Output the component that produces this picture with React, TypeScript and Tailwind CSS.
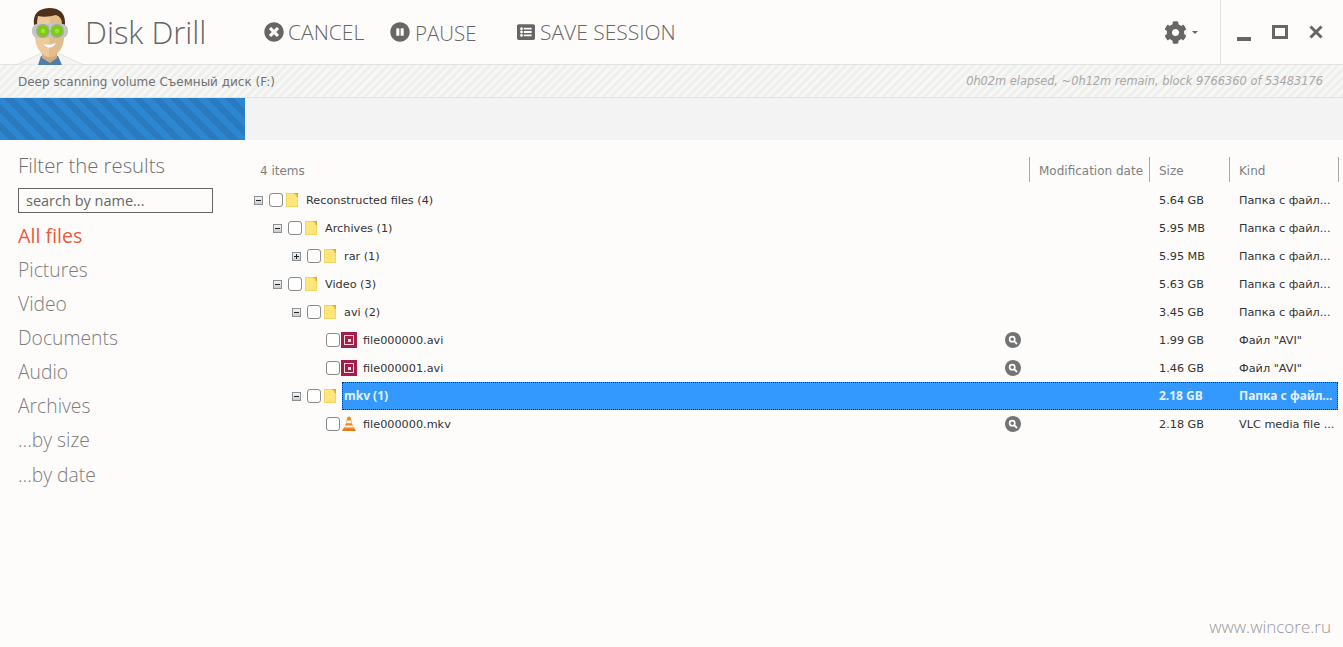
import React from 'react';
import { FaCog, FaListAlt, FaPauseCircle, FaTimesCircle } from 'react-icons/fa';

interface TreeRow {
  name: string;
  count?: string;
  size: string;
  kind: string;
  indent: string;
  toggle?: 'minus' | 'plus';
  icon: 'folder' | 'avi' | 'vlc';
  preview?: boolean;
  selected?: boolean;
}

const FOLDER_KIND = 'Папка с файл...';

const rows: TreeRow[] = [
  { name: 'Reconstructed files', count: '(4)', size: '5.64 GB', kind: FOLDER_KIND, indent: 'pl-[9px]', toggle: 'minus', icon: 'folder' },
  { name: 'Archives', count: '(1)', size: '5.95 MB', kind: FOLDER_KIND, indent: 'pl-[28px]', toggle: 'minus', icon: 'folder' },
  { name: 'rar', count: '(1)', size: '5.95 MB', kind: FOLDER_KIND, indent: 'pl-[47px]', toggle: 'plus', icon: 'folder' },
  { name: 'Video', count: '(3)', size: '5.63 GB', kind: FOLDER_KIND, indent: 'pl-[28px]', toggle: 'minus', icon: 'folder' },
  { name: 'avi', count: '(2)', size: '3.45 GB', kind: FOLDER_KIND, indent: 'pl-[47px]', toggle: 'minus', icon: 'folder' },
  { name: 'file000000.avi', size: '1.99 GB', kind: 'Файл "AVI"', indent: 'pl-[66px]', icon: 'avi', preview: true },
  { name: 'file000001.avi', size: '1.46 GB', kind: 'Файл "AVI"', indent: 'pl-[66px]', icon: 'avi', preview: true },
  { name: 'mkv', count: '(1)', size: '2.18 GB', kind: FOLDER_KIND, indent: 'pl-[47px]', toggle: 'minus', icon: 'folder', selected: true },
  { name: 'file000000.mkv', size: '2.18 GB', kind: 'VLC media file ...', indent: 'pl-[66px]', icon: 'vlc', preview: true },
];

const filters = ['Pictures', 'Video', 'Documents', 'Audio', 'Archives', '...by size', '...by date'];

const Logo = () => (
  <svg viewBox="0 0 90 65" className="w-[90px] h-[65px] shrink-0">
    {/* coat */}
    <path d="M16 65 L40 54 L60 54 L84 65 Z" fill="#f4f4f2" stroke="#dcdcd8" strokeWidth="0.8" />
    <path d="M38 65 L41 56 L58 56 L62 65 Z" fill="#4f7fa8" />
    {/* neck and face */}
    <path d="M42 46 L42 58 L50 63 L57 58 L57 46 Z" fill="#d3ab7c" />
    <path d="M35 20 Q35 12 49 12 Q64 12 64 20 L64 38 Q63 50 54 56 Q49 58 45 56 Q36 50 35 38 Z" fill="#ecca9b" />
    <path d="M50 12 Q64 12 64 20 L64 38 Q63 50 54 56 Q51 57 49 57 Z" fill="#e2bd8c" />
    {/* hair */}
    <path d="M34 25 Q32 9 49 8 Q66 8 65 25 L62 24 Q62 17 56 15 Q46 18 38 16 Q37 20 37 24 Z" fill="#4f3019" />
    {/* smile */}
    <path d="M44 44 Q50 46 56 43 Q53 48 49 47.5 Q46 47.5 44 44 Z" fill="#ffffff" />
    {/* goggles */}
    <rect x="32" y="24" width="36" height="14" rx="6" fill="#c3c6c1" />
    <rect x="47" y="28" width="6" height="6" fill="#e6e8e4" />
    <circle cx="43" cy="31" r="7" fill="#a4a8a3" />
    <circle cx="57" cy="31" r="7" fill="#a4a8a3" />
    <circle cx="43" cy="31" r="5.8" fill="#7ccc14" />
    <circle cx="57" cy="31" r="5.8" fill="#7ccc14" />
    <circle cx="43" cy="31" r="2.2" fill="#a6e03c" />
    <circle cx="57" cy="31" r="2.2" fill="#a6e03c" />
  </svg>
);

const FolderIcon = () => (
  <svg viewBox="0 0 12 14" className="w-3 h-[14px] shrink-0">
    <rect x="0.5" y="0.5" width="11" height="13" fill="#ffe57a" stroke="#f3d65f" />
    <path d="M8.5 0 H12 V4 H10.5 V1.5 H8.5 Z" fill="#e0a92a" />
  </svg>
);

const AviIcon = () => (
  <div className="w-4 h-4 shrink-0 bg-[#a11f48] flex items-center justify-center">
    <div className="w-[10px] h-[10px] border border-[#f0d8de] flex items-center justify-center">
      <div className="w-[3px] h-[3px] bg-[#f0d8de]" />
    </div>
  </div>
);

const VlcIcon = () => (
  <svg viewBox="0 0 16 16" className="w-4 h-4 shrink-0">
    <path d="M1 15 L3 11.5 H13 L15 15 Z" fill="#e07b1a" />
    <path d="M6.6 0.8 H9.4 L12.6 13 H3.4 Z" fill="#f08a1c" />
    <path d="M6 4.5 H10 L10.7 7.3 H5.3 Z" fill="#f6f1ea" />
    <path d="M4.6 9.5 H11.4 L12 11.6 H4 Z" fill="#f6f1ea" />
  </svg>
);

const Toggle = ({ type }: { type?: 'minus' | 'plus' }) => {
  if (!type) return <div className="w-[9px] shrink-0" />;
  return (
    <div className="relative w-[9px] h-[9px] shrink-0 border border-[#8b9097] bg-gradient-to-b from-[#f6f6f6] to-[#c9ccd0]">
      <div className="absolute left-[1px] top-[3px] w-[5px] h-px bg-[#222]" />
      {type === 'plus' && <div className="absolute left-[3px] top-[1px] w-px h-[5px] bg-[#222]" />}
    </div>
  );
};

const PreviewIcon = () => (
  <div className="w-4 h-4 rounded-full bg-[#737373] flex items-center justify-center">
    <svg viewBox="0 0 10 10" className="w-[10px] h-[10px]">
      <circle cx="4.2" cy="4.2" r="2.6" fill="none" stroke="#ffffff" strokeWidth="1.6" />
      <path d="M6.2 6.2 L9 9" stroke="#ffffff" strokeWidth="1.8" />
    </svg>
  </div>
);

const Row = ({ row }: { row: TreeRow }) => (
  <div className={`flex items-center h-7 ${row.indent}`}>
    <Toggle type={row.toggle} />
    <div className="w-[14px] h-[14px] ml-[6px] shrink-0 rounded-[3px] border border-[#8a8a8a] bg-white" />
    {row.icon === 'folder' && (
      <div className="ml-[3px]">
        <FolderIcon />
      </div>
    )}
    {row.icon === 'avi' && (
      <div className="ml-px">
        <AviIcon />
      </div>
    )}
    {row.icon === 'vlc' && (
      <div className="ml-px">
        <VlcIcon />
      </div>
    )}
    <div
      className={`flex-1 h-7 flex items-center ${row.selected ? "ml-[6px] pl-[2px] bg-[#3399ff] outline-1 outline-dotted -outline-offset-1 outline-[#10305a] text-[#e4f2ff] font-bold font-['Noto_Sans',sans-serif] text-[12px]" : row.icon === 'folder' ? 'ml-[6px] pl-[2px] pt-[2px] text-[#333]' : 'ml-[6px] pt-[2px] text-[#333]'}`}
    >
      <span className="flex-1 whitespace-pre">
        {row.name}
        {row.count ? ` ${row.count}` : ''}
      </span>
      {row.preview && (
        <div className="mr-[138px] -mt-[2px]">
          <PreviewIcon />
        </div>
      )}
      <span className="w-20">{row.size}</span>
      <span className="w-[99px] whitespace-nowrap overflow-hidden">{row.kind}</span>
    </div>
  </div>
);

export default function App() {
  return (
    <div className="relative w-[1343px] h-[647px] overflow-hidden flex flex-col bg-[#fdfcfb] font-['DejaVu_Sans',sans-serif] text-[11.25px]">
      {/* Toolbar */}
      <div className="h-[65px] shrink-0 flex items-center border-b border-[#e2e2e0] text-[#666] font-['Open_Sans',sans-serif]">
        <Logo />
        <span className="-ml-[5px] text-[31px] font-light w-[179px]">Disk Drill</span>
        <div className="flex items-center text-[21px] font-light">
          <FaTimesCircle className="w-5 h-5 text-[#666]" />
          <span className="ml-1 w-[102px] pt-[2px]">CANCEL</span>
          <FaPauseCircle className="w-5 h-5 text-[#666]" />
          <span className="ml-[5px] w-[102px] pt-[2px] text-[20.5px]">PAUSE</span>
          <FaListAlt className="w-[18px] h-[18px] text-[#666]" />
          <span className="ml-[5px] pt-[2px]">SAVE SESSION</span>
        </div>
        <div className="flex-1" />
        <div className="flex items-center">
          <FaCog className="w-[23px] h-[23px] text-[#666]" />
          <div className="ml-[5px] w-0 h-0 border-x-[3px] border-x-transparent border-t-[3px] border-t-[#666]" />
        </div>
        <div className="ml-[22px] w-px h-full bg-[#e2e2e0]" />
        <div className="ml-4 mt-[3px] w-[14px] h-1 self-center translate-y-[5px] bg-[#666]" />
        <div className="ml-[21px] w-4 h-[14px] border-[3px] border-[#666]" />
        <svg viewBox="0 0 14 14" className="ml-[21px] mr-5 w-[14px] h-[14px]">
          <path d="M1.5 1.5 L12.5 12.5 M12.5 1.5 L1.5 12.5" stroke="#666" strokeWidth="3" />
        </svg>
      </div>

      {/* Scan status */}
      <div className="h-[33px] shrink-0 flex items-center justify-between pl-[18px] pr-5 pt-[2px] border-b border-[#e2e2e0] bg-[repeating-linear-gradient(135deg,#f7f7f6_0px,#f7f7f6_3px,#efefee_3px,#efefee_6px)]">
        <span className="text-[#717171] text-[12px]">Deep scanning volume Съемный диск (F:)</span>
        <span className="italic text-[#a8a8a8] text-[11.4px]">0h02m elapsed, ~0h12m remain, block 9766360 of 53483176</span>
      </div>

      {/* Progress */}
      <div className="h-[42px] shrink-0 flex bg-[#f3f3f3]">
        <div className="w-[245px] bg-[repeating-linear-gradient(45deg,#2c86d0_0px,#2c86d0_6.5px,#2a7ac0_6.5px,#2a7ac0_13px)]" />
      </div>

      <div className="flex-1 flex min-h-0">
        {/* Filters */}
        <aside className="w-[245px] shrink-0 pl-[18px] font-['Open_Sans',sans-serif] text-[#7d7d7d]">
          <div className="mt-[11px] h-7 leading-7 text-[20.3px] font-light text-[#6f6f6f]">Filter the results</div>
          <div className="mt-[9px] w-[195px] h-[25px] flex items-center border border-[#666] pl-[7px] text-[14.5px] text-[#666]">
            search by name...
          </div>
          <div className="mt-[9px] h-[28px] leading-7 text-[19.7px] text-[#e85a3c]">All files</div>
          {filters.map((item) => (
            <div key={item} className="mt-[6px] last:mt-[7px] h-[28px] leading-7 text-[19.3px] font-light">
              {item}
            </div>
          ))}
        </aside>

        {/* File tree */}
        <main className="flex-1 min-w-0 pr-1">
          <div className="mt-[17px] h-[25px] flex items-center text-[#808080] text-[12px]">
            <span className="flex-1 pl-[15px] pt-[2px]">4 items</span>
            <span className="w-[120px] h-full flex items-center pl-[9px] pt-[2px] border-l border-[#a8a8a8] whitespace-nowrap">Modification date</span>
            <span className="w-20 h-full flex items-center pl-[9px] pt-[2px] border-l border-[#a8a8a8]">Size</span>
            <span className="w-[110px] h-full flex items-center pl-[9px] pt-[2px] border-x border-[#a8a8a8]">Kind</span>
          </div>
          <div className="mt-1 pr-px">
            {rows.map((row) => (
              <Row key={`${row.name}-${row.size}`} row={row} />
            ))}
          </div>
        </main>
      </div>

      <div className="absolute right-3 bottom-[8px] font-['Open_Sans',sans-serif] font-light text-[17px] text-[#9a9a9a]">www.wincore.ru</div>
    </div>
  );
}
